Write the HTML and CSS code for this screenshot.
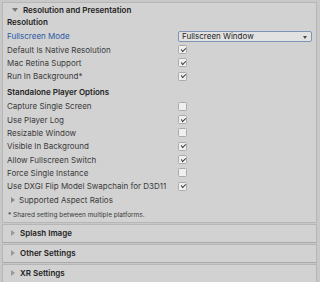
FILE: index.html
```html
<!DOCTYPE html>
<html lang="en">
<head>
  <meta charset="UTF-8" />
  <title>Player Settings</title>
  <link rel="stylesheet" href="styles.css">
</head>
<body>
  <div class="inspector">
    <section class="panel">
      <div class="foldout open"><span class="tri-down"></span>Resolution and Presentation</div>

      <div class="group-title">Resolution</div>
      <div class="row">
        <span class="label active">Fullscreen Mode</span>
        <div class="dropdown">Fullscreen Window<span class="caret"></span></div>
      </div>
      <div class="row"><span class="label">Default Is Native Resolution</span><span class="check on"></span></div>
      <div class="row"><span class="label">Mac Retina Support</span><span class="check on"></span></div>
      <div class="row"><span class="label">Run In Background*</span><span class="check on"></span></div>

      <div class="group-title spaced">Standalone Player Options</div>
      <div class="row"><span class="label">Capture Single Screen</span><span class="check"></span></div>
      <div class="row"><span class="label">Use Player Log</span><span class="check on"></span></div>
      <div class="row"><span class="label">Resizable Window</span><span class="check"></span></div>
      <div class="row"><span class="label">Visible In Background</span><span class="check on"></span></div>
      <div class="row"><span class="label">Allow Fullscreen Switch</span><span class="check on"></span></div>
      <div class="row"><span class="label">Force Single Instance</span><span class="check"></span></div>
      <div class="row"><span class="label">Use DXGI Flip Model Swapchain for D3D11</span><span class="check on"></span></div>
      <div class="row sub"><span class="tri-right"></span>Supported Aspect Ratios</div>

      <div class="note">* Shared setting between multiple platforms.</div>
    </section>

    <div class="foldout closed"><span class="tri-right"></span>Splash Image</div>
    <div class="foldout closed"><span class="tri-right"></span>Other Settings</div>
    <div class="foldout closed"><span class="tri-right"></span>XR Settings</div>
  </div>
</body>
</html>
```

FILE: styles.css
```css
* {
  margin: 0;
  padding: 0;
  box-sizing: border-box;
}
body {
  font-family: Inter, "Noto Sans", sans-serif;
  font-size: 8px;
  color: #3a3a3a;
  background: #c8c8c8;
  width: 320px;
  height: 282px;
  overflow: hidden;
}

.inspector {
  padding: 2px 3px 0 2px;
}

/* основной блок */
.panel {
  background: #d2d2d2;
  border: 1px solid #b6b6b6;
  padding: 0 0 0 4px;
}

.foldout {
  display: flex;
  align-items: center;
  font-weight: 600;
  color: #222;
}
.foldout.open {
  height: 13.33px;
  padding-left: 5px;
}
.foldout.open .tri-down {
  margin-right: 5px;
}
.foldout.closed {
  height: 19px;
  margin-top: 1px;
  padding-left: 8px;
  background: #d2d2d2;
  border: 1px solid #b6b6b6;
  border-bottom-color: #a9a9a9;
}
.foldout.closed .tri-right {
  margin-right: 5px;
  border-left-color: #9a9a9a;
}

.group-title {
  height: 13.33px;
  line-height: 13.33px;
  font-weight: 600;
  color: #222;
}
.group-title.spaced {
  margin-top: 3.33px;
}

.row {
  display: grid;
  grid-template-columns: 171px 1fr;
  align-items: center;
  height: 13.33px;
}
.row.sub {
  display: flex;
  padding-left: 4px;
}
.row.sub .tri-right {
  margin-right: 4px;
}

.label.active {
  color: #2b59a6;
}

.dropdown {
  position: relative;
  height: 11px;
  width: 134px;
  line-height: 9px;
  padding-left: 3px;
  background: #e2e2e2;
  border: 1px solid #7f93b8;
  border-radius: 2px;
  color: #222;
}
.caret {
  position: absolute;
  right: 4px;
  top: 4px;
  border-left: 2.5px solid transparent;
  border-right: 2.5px solid transparent;
  border-top: 3px solid #4a4a4a;
}

.check {
  width: 9px;
  height: 9px;
  background: #efefef;
  border: 1px solid #ababab;
  border-radius: 1.5px;
  position: relative;
}
.check.on::after {
  content: "";
  position: absolute;
  left: 2px;
  top: 1.5px;
  width: 3.5px;
  height: 1.8px;
  border-left: 1.1px solid #3a3a3a;
  border-bottom: 1.1px solid #3a3a3a;
  transform: rotate(-45deg) skewX(-10deg);
}

.tri-down {
  width: 0;
  height: 0;
  border-left: 3px solid transparent;
  border-right: 3px solid transparent;
  border-top: 4px solid #777;
}
.tri-right {
  width: 0;
  height: 0;
  border-top: 3px solid transparent;
  border-bottom: 3px solid transparent;
  border-left: 4px solid #8a8a8a;
}

.note {
  font-size: 6.5px;
  color: #3a3a3a;
  padding: 5px 0 3px 1px;
  height: 15.67px;
}
```
